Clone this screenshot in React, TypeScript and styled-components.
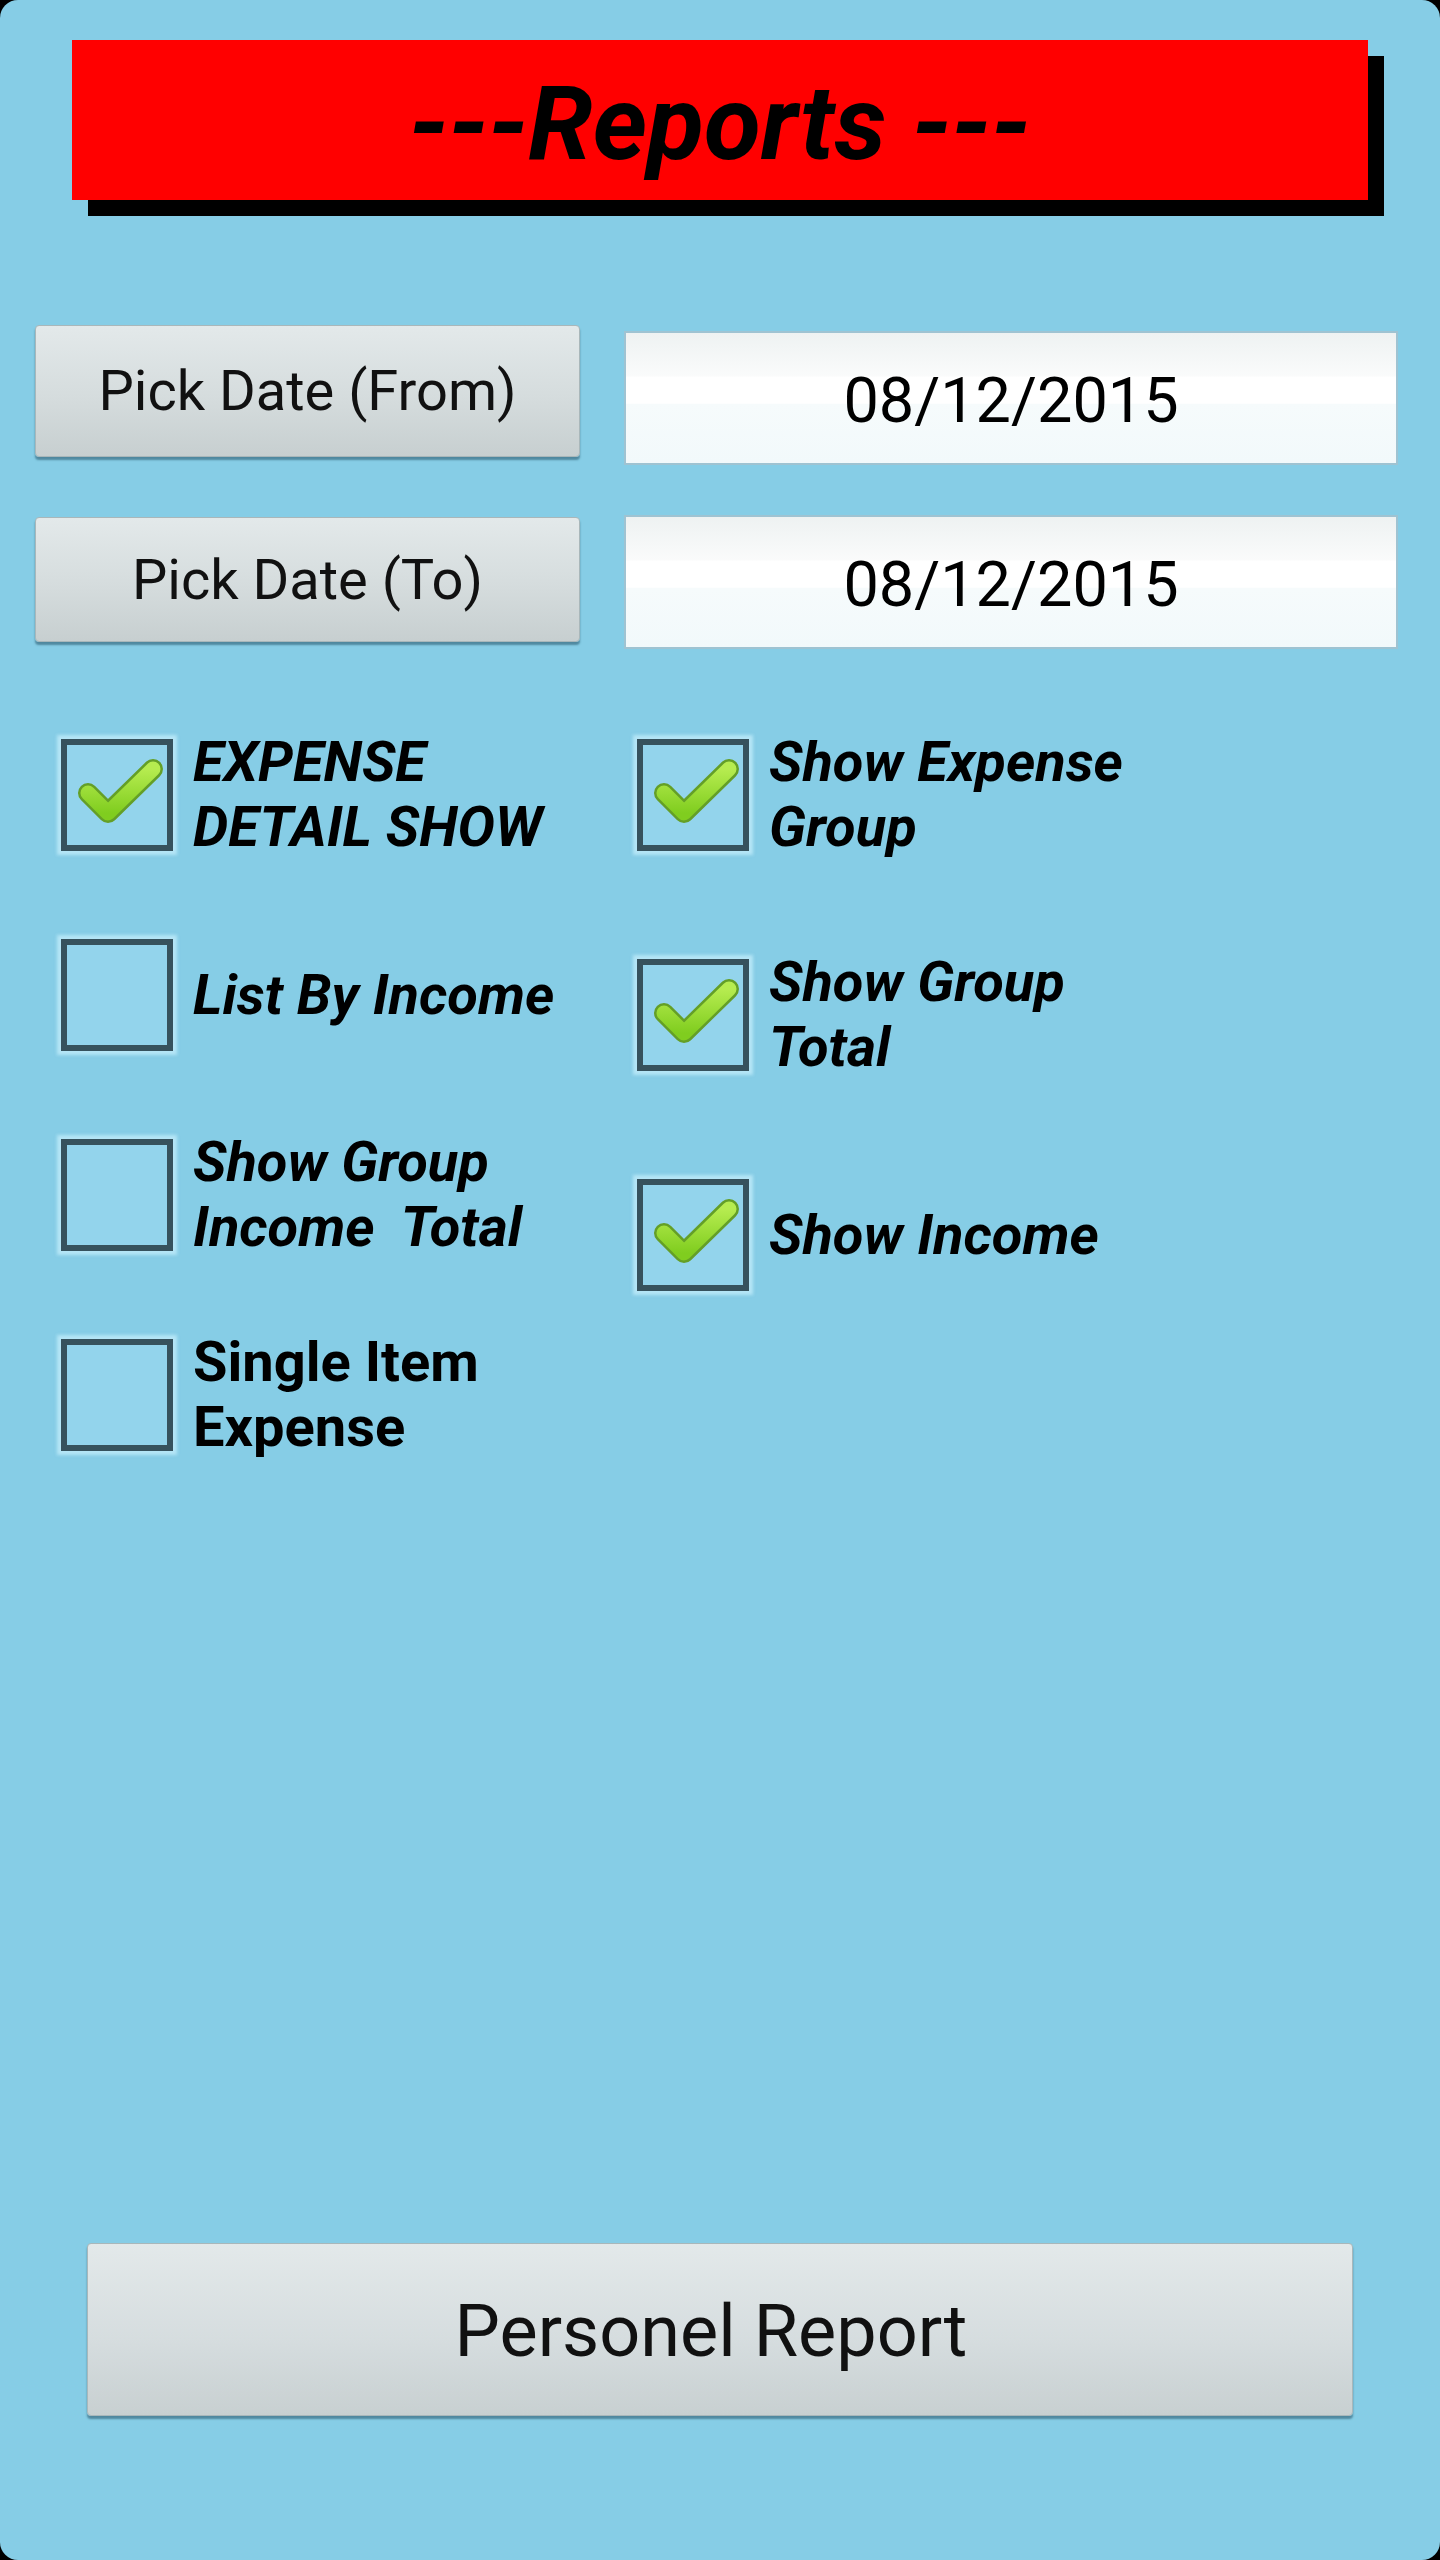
import React from 'react';
import styled, { createGlobalStyle } from "styled-components";

const GlobalStyle = createGlobalStyle`
    html, body {
        margin: 0;
        padding: 0;
        background: #000;
    }
    * {
        box-sizing: border-box;
    }
`

type OptionType = {
    label: string[]
    checked: boolean
    italic?: boolean
}

const leftOptions: OptionType[] = [
    {label: ["EXPENSE", "DETAIL SHOW"], checked: true, italic: true},
    {label: ["List By Income"], checked: false, italic: true},
    {label: ["Show Group", "Income  Total"], checked: false, italic: true},
    {label: ["Single Item", "Expense"], checked: false},
]

const rightOptions: OptionType[] = [
    {label: ["Show Expense", "Group"], checked: true, italic: true},
    {label: ["Show Group", "Total"], checked: true, italic: true},
    {label: ["Show Income"], checked: true, italic: true},
]

const CheckMark = () => (
    <svg width="112" height="112" viewBox="0 0 112 112">
        <defs>
            <linearGradient id="tick" x1="0" y1="0" x2="0" y2="1">
                <stop offset="0" stopColor="#b6ec50"/>
                <stop offset="1" stopColor="#80cd1f"/>
            </linearGradient>
        </defs>
        <polyline points="27,54 47,74 92,30" fill="none" stroke="#649f27"
                  strokeWidth="20" strokeLinecap="round" strokeLinejoin="round"/>
        <polyline points="27,54 47,74 92,30" fill="none" stroke="url(#tick)"
                  strokeWidth="15" strokeLinecap="round" strokeLinejoin="round"/>
    </svg>
)

const Option = (props: OptionType & { rowHeight: number }) => {
    return (
        <OptionRow $height={props.rowHeight}>
            <Box>{props.checked && <CheckMark/>}</Box>
            <Label $italic={!!props.italic}>
                {props.label.map((line, i) => <span key={i}>{line}</span>)}
            </Label>
        </OptionRow>
    )
}

export default function App() {
    return (
        <>
            <GlobalStyle/>
            <Screen>
                <Header>---Reports ---</Header>

                <DateRow $top={125}>
                    <PickButton $height={132}>Pick Date (From)</PickButton>
                    <DateField $offset={6}>08/12/2015</DateField>
                </DateRow>
                <DateRow $top={50}>
                    <PickButton $height={125} $offset={2}>Pick Date (To)</PickButton>
                    <DateField>08/12/2015</DateField>
                </DateRow>

                <Options>
                    <Column>
                        {leftOptions.map((o, i) => <Option key={i} {...o} rowHeight={200}/>)}
                    </Column>
                    <Column $shift={-10}>
                        {rightOptions.map((o, i) => <Option key={i} {...o} rowHeight={220}/>)}
                    </Column>
                </Options>

                <ReportButton>Personel Report</ReportButton>
            </Screen>
        </>
    );
}

const Screen = styled.div`
    width: 1440px;
    height: 2560px;
    background: #86cde6;
    border-radius: 18px;
    display: flex;
    flex-direction: column;
    font-family: Roboto, "Liberation Sans", sans-serif;
    color: #000;
    overflow: hidden;
`
const Header = styled.div`
    margin: 40px 72px 0 72px;
    height: 160px;
    background: #ff0000;
    box-shadow: 16px 16px 0 #000;
    display: flex;
    align-items: center;
    justify-content: center;
    font-size: 104px;
    font-weight: 700;
    font-style: italic;
    color: #000;
    padding-top: 6px;
`
const DateRow = styled.div<{ $top: number }>`
    display: flex;
    align-items: flex-start;
    gap: 44px;
    margin-top: ${p => p.$top}px;
    padding: 0 42px 0 35px;
`
const PickButton = styled.button<{ $height: number, $offset?: number }>`
    width: 545px;
    height: ${p => p.$height}px;
    margin-top: ${p => p.$offset || 0}px;
    border: 1px solid #a9b7ba;
    border-radius: 4px;
    background: linear-gradient(#e3e9ea, #d5dcdd 55%, #c7cfd0);
    box-shadow: 0 3px 2px rgba(35, 80, 100, 0.55);
    font-family: Roboto, "Liberation Sans", sans-serif;
    font-size: 56px;
    font-weight: 400;
    color: #111;
    padding: 0;
`
const DateField = styled.div<{ $offset?: number }>`
    flex: 1;
    height: 134px;
    margin-top: ${p => p.$offset || 0}px;
    border: 2px solid #9fc3d2;
    background: linear-gradient(#eef2f2 0%, #fafbfb 33%, #ffffff 34%, #ffffff 54%, #f6fbfc 55%, #f2f9fb 100%);
    display: flex;
    align-items: center;
    justify-content: center;
    font-size: 63px;
    color: #000;
    padding-top: 4px;
`
const Options = styled.div`
    display: grid;
    grid-template-columns: 576px 1fr;
    margin-top: 46px;
    padding-left: 61px;
`
const Column = styled.div<{ $shift?: number }>`
    display: flex;
    flex-direction: column;
    margin-top: ${p => p.$shift || 0}px;
`
const OptionRow = styled.div<{ $height: number }>`
    display: flex;
    align-items: center;
    height: ${p => p.$height}px;
`
const Box = styled.span`
    flex: none;
    width: 112px;
    height: 112px;
    border: 6px solid #36525d;
    background: #93d4ec;
    box-shadow: 0 0 3px 4px rgba(200, 240, 252, 0.7);
    display: flex;

    svg {
        margin: -6px;
    }
`
const Label = styled.div<{ $italic: boolean }>`
    margin-left: 20px;
    display: flex;
    flex-direction: column;
    font-size: 56px;
    line-height: 65px;
    font-weight: 700;
    font-style: ${p => p.$italic ? "italic" : "normal"};
    white-space: pre;
    color: #000;
`
const ReportButton = styled.button`
    margin: auto 87px 144px 87px;
    height: 173px;
    border: 1px solid #a9b7ba;
    border-radius: 4px;
    background: linear-gradient(#e3e9ea, #d6dddf 55%, #c8d0d1);
    box-shadow: 0 3px 2px rgba(35, 80, 100, 0.55);
    font-family: Roboto, "Liberation Sans", sans-serif;
    font-size: 72px;
    font-weight: 400;
    color: #111;
    padding: 4px 18px 0 0;
`
